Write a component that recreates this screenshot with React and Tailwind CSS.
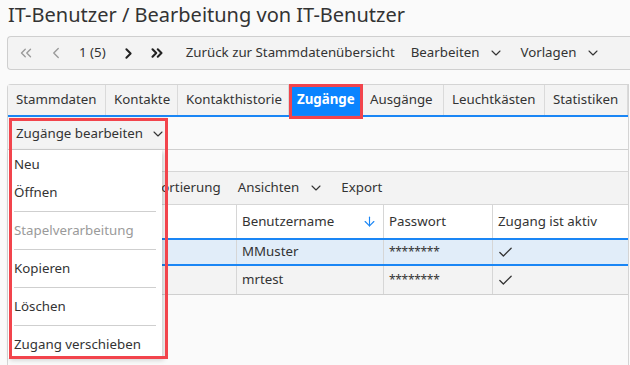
import React from "react";
import { ChevronsLeft, ChevronLeft, ChevronRight, ChevronsRight, ChevronDown, ArrowDown, Check } from "lucide-react";

const tabs = [
  { label: "Stammdaten", w: "w-[98px]" },
  { label: "Kontakte", w: "w-[72px]" },
  { label: "Kontakthistorie", w: "w-[111px]" },
  { label: "Zugänge", w: "w-[73px]", active: true },
  { label: "Ausgänge", w: "w-[82px]" },
  { label: "Leuchtkästen", w: "w-[101px]" },
  { label: "Statistiken", w: "w-[83px]" },
];

function Sep() {
  return (
    <div className="h-[10px] flex items-center px-[6px]">
      <div className="h-px w-full bg-[#cfcfcf]" />
    </div>
  );
}

function Item({ children, muted }) {
  return (
    <div className={"h-[28px] flex items-center px-[6px] pt-[2px] " + (muted ? "text-[#9a9a9a]" : "text-[#333]")}>
      {children}
    </div>
  );
}

export default function App() {
  return (
    <div className="relative w-[630px] h-[365px] overflow-hidden bg-[#fafafa] text-[#333] font-['Noto_Sans',sans-serif] text-[13.3px]">
      <div className="h-[36px] pl-[8px] pt-[1px] text-[20px] leading-[28px] text-[#333]">
        IT-Benutzer / Bearbeitung von IT-Benutzer
      </div>

      <div className="ml-[7px] h-[34px] border border-r-0 border-[#cfcfcf] rounded-l-[4px] bg-[#f3f3f3] flex items-center whitespace-nowrap">
        <ChevronsLeft size={18} strokeWidth={1.8} className="ml-[9px] text-[#9a9a9a]" />
        <ChevronLeft size={18} strokeWidth={1.8} className="ml-[12px] text-[#9a9a9a]" />
        <span className="ml-[14px]">1 (5)</span>
        <ChevronRight size={17} strokeWidth={2.8} className="ml-[14px] text-[#222]" />
        <ChevronsRight size={18} strokeWidth={2.8} className="ml-[11px] text-[#222]" />
        <span className="ml-[20px]">Zurück zur Stammdatenübersicht</span>
        <span className="ml-[16px]">Bearbeiten</span>
        <ChevronDown size={16} strokeWidth={1.6} className="ml-[9px]" />
        <span className="ml-[16px]">Vorlagen</span>
        <ChevronDown size={16} strokeWidth={1.6} className="ml-[9px]" />
      </div>

      <div className="ml-[7px] mt-[14px] w-[622px] border-l border-r border-t border-[#d4d4d4] rounded-tl-[4px] flex flex-col">
        <div className="flex h-[30px]">
          {tabs.map((t) => (
            <div
              key={t.label}
              className={
                t.w +
                " h-full flex items-center px-[8px] border-r border-[#dadada] whitespace-nowrap " +
                (t.active ? "bg-[#0a84ff] text-white font-bold" : "bg-[#f3f3f3] text-[#333]")
              }
            >
              {t.label}
            </div>
          ))}
        </div>
        <div className="h-[2px] bg-[#1a86f5]" />

        <div className="h-[33px] border-b border-[#cfcfcf] flex">
          <div className="w-[159px] h-full bg-[#f3f3f3] flex items-center pl-[8px] pt-[1px] whitespace-nowrap">
            Zugänge bearbeiten
            <ChevronDown size={16} strokeWidth={1.6} className="ml-[7px]" />
          </div>
        </div>

        <div className="h-[21px]" />

        <div className="h-[34px] border-t border-b border-[#d6d6d6] bg-[#f3f3f3] flex items-center whitespace-nowrap">
          <span className="ml-[146px]">Sortierung</span>
          <span className="ml-[17px]">Ansichten</span>
          <ChevronDown size={16} strokeWidth={1.6} className="ml-[9px]" />
          <span className="ml-[17px]">Export</span>
        </div>

        <div className="h-[33px] bg-white flex">
          <div className="w-[228px] h-full" />
          <div className="w-[147px] h-full border-l border-[#d6d6d6] flex items-center justify-between pl-[5px] pr-[6px]">
            <span>Benutzername</span>
            <ArrowDown size={15} strokeWidth={1.8} className="text-[#1a86f5]" />
          </div>
          <div className="w-[109px] h-full border-l border-[#d6d6d6] flex items-center pl-[5px]">Passwort</div>
          <div className="flex-1 h-full border-l border-[#d6d6d6] flex items-center pl-[5px]">Zugang ist aktiv</div>
        </div>

        <div className="h-[28px] bg-[#e1edf9] border-t-2 border-b-2 border-[#1a86f5] flex">
          <div className="w-[228px] h-full" />
          <div className="w-[147px] h-full border-l border-[#d6d6d6] flex items-center pl-[5px]">MMuster</div>
          <div className="w-[109px] h-full border-l border-[#d6d6d6] flex items-center pl-[5px] text-[12px] tracking-[-0.3px]">********</div>
          <div className="flex-1 h-full border-l border-[#d6d6d6] flex items-center pl-[4px]">
            <Check size={17} strokeWidth={1.8} />
          </div>
        </div>

        <div className="h-[29px] bg-[#f3f3f3] border-b border-[#cfcfcf] flex">
          <div className="w-[228px] h-full" />
          <div className="w-[147px] h-full border-l border-[#d6d6d6] flex items-center pl-[5px]">mrtest</div>
          <div className="w-[109px] h-full border-l border-[#d6d6d6] flex items-center pl-[5px] text-[12px] tracking-[-0.3px]">********</div>
          <div className="flex-1 h-full border-l border-[#d6d6d6] flex items-center pl-[4px]">
            <Check size={17} strokeWidth={1.8} />
          </div>
        </div>
        <div className="h-[80px]" />
      </div>

      {/* dropdown menu */}
      <div className="absolute left-[8px] top-[150px] w-[154px] bg-white shadow-[2px_2px_5px_rgba(0,0,0,0.18)] flex flex-col whitespace-nowrap">
        <Item>Neu</Item>
        <Item>Öffnen</Item>
        <Sep />
        <Item muted>Stapelverarbeitung</Item>
        <Sep />
        <Item>Kopieren</Item>
        <Sep />
        <Item>Löschen</Item>
        <Sep />
        <Item>Zugang verschieben</Item>
      </div>

      {/* highlight boxes */}
      <div className="absolute left-[9px] top-[118px] w-[159px] h-[241px] border-[3px] border-[#f2444c] pointer-events-none" />
      <div className="absolute left-[289px] top-[84px] w-[74px] h-[35px] border-[3px] border-[#f2444c] pointer-events-none" />
    </div>
  );
}
